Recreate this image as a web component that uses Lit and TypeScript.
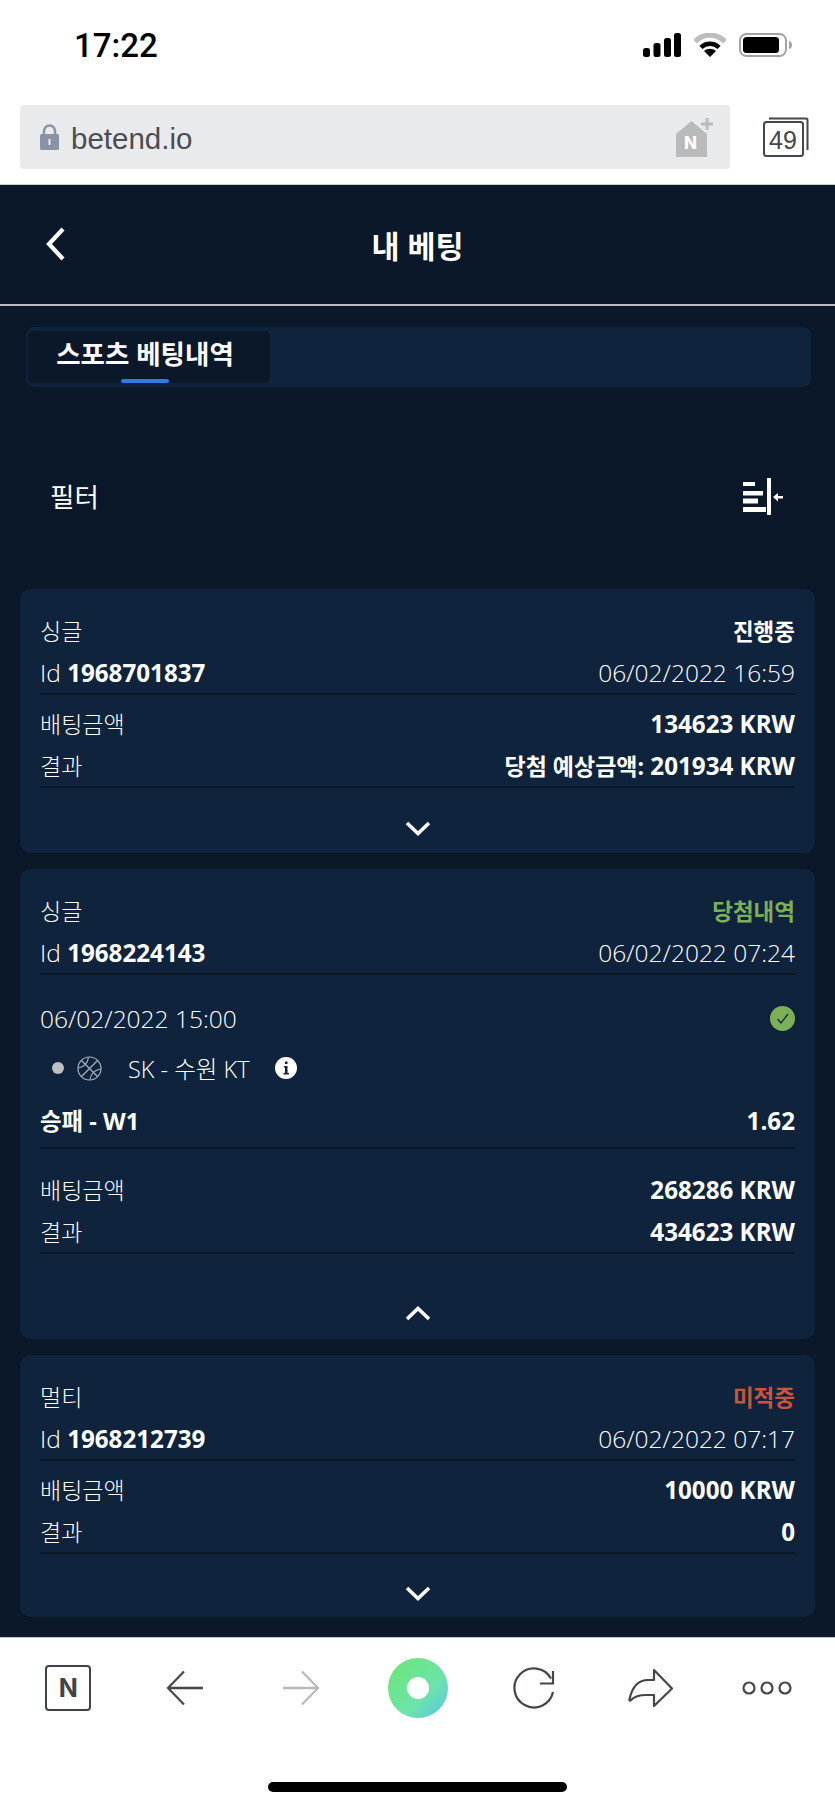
import { LitElement, html, css, svg } from 'lit';
import { customElement } from 'lit/decorators.js';

const chevronDown = html`<svg class="chev" width="26" height="15" viewBox="0 0 26 15"><path d="M2 2l11 10.5L24 2" fill="none" stroke="#fff" stroke-width="3.6"/></svg>`;
const chevronUp = html`<svg class="chev" width="26" height="15" viewBox="0 0 26 15"><path d="M2 13L13 2.5 24 13" fill="none" stroke="#fff" stroke-width="3.6"/></svg>`;

const bets = [
  { kind: '싱글', status: '진행중', cls: '', id: '1968701837', date: '06/02/2022 16:59', stake: '134623 KRW', prefix: '당첨 예상금액:', result: '201934 KRW', foot: 'foot-a' },
  { kind: '싱글', status: '당첨내역', cls: 'won', id: '1968224143', date: '06/02/2022 07:24', stake: '268286 KRW', result: '434623 KRW', open: true, foot: 'foot-b' },
  { kind: '멀티', status: '미적중', cls: 'lost', id: '1968212739', date: '06/02/2022 07:17', stake: '10000 KRW', result: '0', foot: 'foot-c' },
];

@customElement('app-root')
export class AppRoot extends LitElement {
  static styles = css`
    :host {
      display: block;
      width: 835px;
      font-family: 'Open Sans', 'Noto Sans CJK KR', sans-serif;
      font-size: 24.5px;
      color: #fff;
    }
    .top {
      height: 185px;
      background: #fff;
      border-bottom: 1px solid #c9cbcd;
      box-sizing: border-box;
    }
    .status {
      height: 105px;
      display: flex;
      align-items: flex-start;
      padding: 33px 43px 0 74px;
      box-sizing: border-box;
    }
    .time {
      font-family: Roboto, sans-serif;
      font-weight: 500;
      font-size: 33px;
      line-height: 26px;
      color: #000;
      flex: 1;
    }
    .status-icons { display: flex; gap: 13px; }
    .address-row {
      display: flex;
      align-items: flex-start;
      padding-left: 20px;
    }
    .address {
      width: 710px;
      height: 64px;
      background: #e9eaec;
      border-radius: 4px;
      display: flex;
      align-items: center;
      padding: 0 16px 0 20px;
      box-sizing: border-box;
    }
    .lock { margin-right: 12px; }
    .url {
      flex: 1;
      font-family: 'Liberation Sans', sans-serif;
      font-size: 29.5px;
      line-height: 34px;
      padding-top: 3px;
      color: #4c4d52;
    }
    .tabs-btn { margin: 12px 0 0 33px; }
    .page {
      background: #0a1829;
      height: 1452px;
      box-sizing: border-box;
    }
    .title {
      height: 119px;
      border-bottom: 2px solid #b9bcc0;
      display: flex;
      align-items: center;
      justify-content: center;
      position: relative;
      font-size: 30.5px;
      font-weight: 700;
      color: #fff;
    }
    .back { position: absolute; left: 44px; top: 41px; }
    .tabbar {
      margin: 21px 24px 0 26px;
      height: 60px;
      background: #10233c;
      border-radius: 8px;
      padding: 4px 2px;
      box-sizing: border-box;
    }
    .tab {
      width: 242px;
      height: 52px;
      background: #0a1829;
      border-radius: 6px;
      display: flex;
      justify-content: center;
      padding: 5px 8px 0 0;
      box-sizing: border-box;
      position: relative;
      font-size: 26.5px;
      font-weight: 700;
      line-height: 36px;
      color: #fff;
    }
    .tab::after {
      content: '';
      position: absolute;
      left: 93px;
      bottom: 0;
      width: 48px;
      height: 4px;
      border-radius: 2px;
      background: #2f7de1;
    }
    .filter {
      height: 202px;
      padding: 91px 52px 0 50px;
      box-sizing: border-box;
      display: flex;
      justify-content: space-between;
      align-items: flex-start;
      font-size: 26.5px;
      line-height: 38px;
      font-weight: 400;
    }
    .cards {
      display: flex;
      flex-direction: column;
      gap: 16px;
      padding: 0 20px;
    }
    .card {
      background: #10233c;
      border-radius: 10px;
      padding: 20px 20px 0;
    }
    .row {
      display: flex;
      justify-content: space-between;
      align-items: center;
      height: 42px;
      white-space: nowrap;
    }
    .ruled {
      border-bottom: 2px solid #0a1829;
      margin-bottom: 7px;
    }
    .label { font-weight: 300; font-size: 23px; }
    .light { font-weight: 300; }
    b { font-weight: 700; color: #fff; font-size: 24.2px; }
    b .prefix { font-size: 23px; }
    .won { color: #7cb058; }
    .lost { color: #c9563c; }
    .status-text { font-size: 22.5px; font-weight: 700; }
    .match { padding-top: 15px; margin-bottom: 19px; }
    .match .team { margin-top: 8px; justify-content: flex-start; }
    .match .pick { margin-top: 11px; }
    .match .ruled { margin-bottom: 0; height: 47px; padding-bottom: 0; align-items: flex-start; line-height: 42px; }
    .pick-name { font-size: 23.5px; }
    .dot {
      width: 12px;
      height: 12px;
      border-radius: 50%;
      background: #bdbfc3;
      margin: 0 13px 0 12px;
    }
    .team-name { margin-left: 26px; font-weight: 300; font-size: 23.5px; }
    .info { margin-left: 25px; }
    .foot { display: flex; justify-content: center; }
    .chev { display: block; }
    .foot-a { padding: 26px 0 17px; }
    .foot-b { padding: 45px 0 18px; }
    .foot-c { padding: 25px 0 16px; }
    .bottom {
      height: 170px;
      background: #fff;
      border-top: 1px solid #bfc3c7;
      box-sizing: border-box;
    }
    .tools {
      display: grid;
      grid-template-columns: repeat(7, 116.5px);
      padding: 20px 0 0 10px;
      height: 60px;
    }
    .tool { display: flex; align-items: center; justify-content: center; }
    .home-bar {
      width: 299px;
      height: 10px;
      border-radius: 5px;
      background: #000;
      margin: 64px auto 0;
    }
    .nbox {
      font-family: 'Inter', sans-serif;
      font-weight: 700;
      font-size: 25px;
      color: #3f4348;
      width: 46px;
      height: 46px;
      border: 2.5px solid #3f4348;
      border-radius: 4px;
      box-sizing: border-box;
      display: flex;
      align-items: center;
      justify-content: center;
    }
    .house-wrap { position: relative; width: 40px; height: 40px; }
    .house-n {
      position: absolute;
      left: 10px;
      top: 16px;
      font-family: 'Inter', sans-serif;
      font-weight: 800;
      font-size: 17px;
      line-height: 20px;
      color: #fff;
    }
    .tabs-wrap { position: relative; width: 46px; height: 40px; }
    .tabs-num {
      position: absolute;
      left: 3px;
      top: 8px;
      width: 34px;
      text-align: center;
      font-family: 'Liberation Sans', sans-serif;
      font-size: 25px;
      line-height: 30px;
      color: #43464b;
    }
  `;

  renderStatusIcons() {
    return html`<div class="status-icons">
      <svg width="38" height="24" viewBox="0 0 38 24"><rect x="0" y="15" width="7" height="9" rx="2.5"/><rect x="10.5" y="10" width="7" height="14" rx="2.5"/><rect x="21" y="5" width="7" height="19" rx="2.5"/><rect x="31" y="0" width="7" height="24" rx="2.5"/></svg>
      <svg width="32" height="24" viewBox="0 0 32 24">
        <path d="M1 8.500C9.500 0 22.500 0 31 8.500" fill="none" stroke="#bdbdbd" stroke-width="5"/>
        <path d="M7 14.500C12 9.500 20 9.500 25 14.500" fill="none" stroke="#000" stroke-width="4.500"/>
        <path d="M16 24l-6-6c3.500-3 8.500-3 12 0z"/>
      </svg>
      <svg width="53" height="24" viewBox="0 0 53 24">
        <rect x="1" y="1" width="46" height="22" rx="6.500" fill="none" stroke="#a2a2a2" stroke-width="2"/>
        <rect x="4" y="4" width="36" height="16" rx="3.500"/>
        <path d="M50 8c2 .5 3 2 3 4s-1 3.500-3 4z" fill="#a2a2a2"/>
      </svg>
    </div>`;
  }

  renderTop() {
    return html`<div class="top">
      <div class="status">
        <div class="time">17:22</div>
        ${this.renderStatusIcons()}
      </div>
      <div class="address-row">
        <div class="address">
          <svg class="lock" width="19" height="26" viewBox="0 0 19 26"><path d="M4 11V7a5.500 5.500 0 0 1 11 0v4" fill="none" stroke="#8a93a6" stroke-width="2.500"/><rect y="10" width="19" height="16" rx="1.500" fill="#8a93a6"/><rect x="8.500" y="15" width="2" height="6" fill="#e9eaec"/></svg>
          <div class="url">betend.io</div>
          <div class="house-wrap">
            <svg width="40" height="40" viewBox="0 0 40 40"><path d="M2 40V17L17.500 4 33 17v23z" fill="#b9babc"/><path d="M33 1v12M27 7h12" stroke="#b9babc" stroke-width="3"/></svg>
            <span class="house-n">N</span>
          </div>
        </div>
        <div class="tabs-btn">
          <div class="tabs-wrap">
            <svg width="46" height="40" viewBox="0 0 46 40"><path d="M6 1.500h37a1.500 1.500 0 0 1 1.500 1.500v30" fill="none" stroke="#43464b" stroke-width="2"/><rect x="1" y="5" width="39" height="34" rx="2.500" fill="#fff" stroke="#43464b" stroke-width="2"/></svg>
            <span class="tabs-num">49</span>
          </div>
        </div>
      </div>
    </div>`;
  }

  renderMatch() {
    return html`<div class="match">
      <div class="row">
        <span class="light">06/02/2022 15:00</span>
        <svg width="25" height="25" viewBox="0 0 25 25"><circle cx="12.500" cy="12.500" r="12.500" fill="#7cb058"/><path d="M7.500 13l3.500 4 7-9" fill="none" stroke="#10233c" stroke-width="1.300"/></svg>
      </div>
      <div class="row team">
        <span class="dot"></span>
        <svg width="25" height="25" viewBox="0 0 25 25" fill="none" stroke="#a9b2bd" stroke-width="1.200">
          <circle cx="12.500" cy="12.500" r="11.500"/>
          <path d="M4.500 4.500L20.500 20.500M20.500 4.500L4.500 20.500M1.500 12c5-1 9-4 10-10.500M13 23.500c1-6.500 5-9.500 10.500-10.500"/>
        </svg>
        <span class="team-name">SK - 수원 KT</span>
        <svg class="info" width="22" height="22" viewBox="0 0 22 22"><circle cx="11" cy="11" r="11" fill="#fff"/><path d="M9 9h3.500v7H14v1.500H8.500V16H10v-5.500H9zM10 4.500h2.500V7H10z" fill="#10233c"/></svg>
      </div>
      <div class="row ruled pick"><b class="pick-name">승패 - W1</b><b>1.62</b></div>
    </div>`;
  }

  renderCard(bet: any) {
    return html`<div class="card">
      <div class="row"><span class="label">${bet.kind}</span><span class="status-text ${bet.cls}">${bet.status}</span></div>
      <div class="row ruled"><span class="light">Id <b>${bet.id}</b></span><span class="light">${bet.date}</span></div>
      ${bet.open ? this.renderMatch() : ''}
      <div class="row"><span class="label">배팅금액</span><b>${bet.stake}</b></div>
      <div class="row ruled"><span class="label">결과</span><b>${bet.prefix ? html`<span class="prefix">${bet.prefix}</span> ` : ''}${bet.result}</b></div>
      <div class="foot ${bet.foot}">${bet.open ? chevronUp : chevronDown}</div>
    </div>`;
  }

  renderTools() {
    const ink = '#43464b';
    return html`<div class="tools">
      <div class="tool"><div class="nbox">N</div></div>
      <div class="tool"><svg width="38" height="36" viewBox="0 0 38 36" fill="none" stroke=${ink} stroke-width="2.200"><path d="M18 1.500L2 18l16 16.500"/><path d="M2 18h35" stroke-width="2.600"/></svg></div>
      <div class="tool"><svg width="38" height="36" viewBox="0 0 38 36" fill="none" stroke="#b8b9bb" stroke-width="2.200"><path d="M20 1.500L36 18 20 34.500"/><path d="M36 18H1" stroke-width="2.600"/></svg></div>
      <div class="tool"><svg width="60" height="60" viewBox="0 0 60 60">
        <defs><linearGradient id="g" x1="0.2" y1="0.2" x2="0.9" y2="0.95"><stop offset="0" stop-color="#6ce585"/><stop offset="0.6" stop-color="#6ce3ac"/><stop offset="1" stop-color="#5cc8e0"/></linearGradient></defs>
        <circle cx="30" cy="30" r="30" fill="url(#g)"/><circle cx="30" cy="30" r="11" fill="#fff"/>
      </svg></div>
      <div class="tool"><svg width="44" height="42" viewBox="0 0 44 42" fill="none" stroke=${ink} stroke-width="2.200"><path d="M41 25a19.500 19.500 0 1 1-2-13.500"/><path d="M41 4v12.500H28"/></svg></div>
      <div class="tool"><svg width="46" height="40" viewBox="0 0 46 40" fill="none" stroke=${ink} stroke-width="2.200" stroke-linejoin="round"><path d="M26 2l18 18.500L26 38v-11h-8c-6 0-11 1-15 5-1 1-2 .5-1.500-1C4 20 10 12 20 12h6z"/></svg></div>
      <div class="tool"><svg width="50" height="14" viewBox="0 0 50 14" fill="none" stroke=${ink} stroke-width="2.200"><circle cx="7" cy="7" r="5.500"/><circle cx="25" cy="7" r="5.500"/><circle cx="43" cy="7" r="5.500"/></svg></div>
    </div>`;
  }

  render() {
    return html`
      ${this.renderTop()}
      <div class="page">
        <div class="title">
          <svg class="back" width="22" height="36" viewBox="0 0 22 36"><path d="M19 3L5 18l14 15" fill="none" stroke="#fff" stroke-width="4.200"/></svg>
          내 베팅
        </div>
        <div class="tabbar"><div class="tab">스포츠 베팅내역</div></div>
        <div class="filter">
          <span>필터</span>
          <svg width="40" height="38" viewBox="0 0 40 38" fill="#fff">
            ${svg`<rect x="0" y="4" width="12" height="4"/><rect x="0" y="13" width="20" height="4.500"/><rect x="0" y="20.500" width="15" height="5"/><rect x="0" y="29" width="23" height="5"/><rect x="24" y="0" width="4" height="37"/><path d="M30 19l5-4v3h5v2.500h-5v3z"/>`}
          </svg>
        </div>
        <div class="cards">${bets.map((b) => this.renderCard(b))}</div>
      </div>
      <div class="bottom">
        ${this.renderTools()}
        <div class="home-bar"></div>
      </div>
    `;
  }
}
